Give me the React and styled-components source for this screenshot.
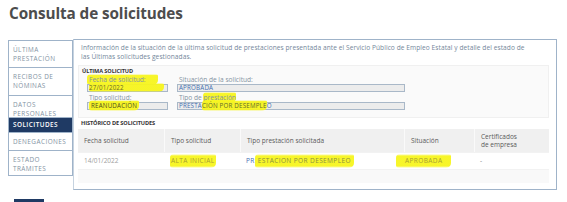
import React from 'react';
import styled, { createGlobalStyle } from 'styled-components';

const FONT = '"Open Sans", "Noto Sans", sans-serif';
const NAVY = '#1f3a64';
const LINE = '#9fb3c9';

const GlobalStyle = createGlobalStyle`
  html, body {
    margin: 0;
    padding: 0;
    background: #ffffff;
  }
  body {
    font-family: ${FONT};
    width: 567px;
    height: 202px;
    overflow: hidden;
  }
`;

const Page = styled.div`
  position: relative;
  width: 567px;
  height: 202px;
`;

const Title = styled.h1`
  margin: 0;
  padding: 3px 0 0 9px;
  height: 37px;
  box-sizing: border-box;
  font-size: 15.3px;
  font-weight: 700;
  color: #4d4d4d;
  letter-spacing: -0.1px;
`;

const Layout = styled.div`
  display: flex;
  align-items: flex-start;
  margin-left: 8px;
  margin-top: 3px;
`;

const Sidebar = styled.nav`
  width: 65px;
  display: flex;
  flex-direction: column;
  border-left: 1px solid ${LINE};
  border-top: 1px solid ${LINE};
  box-sizing: border-box;
`;

const NavItem = styled.div`
  height: ${(p) => p.$h}px;
  box-sizing: border-box;
  padding: ${(p) => (p.$active ? '0 4px' : '5px 4px 0')};
  display: flex;
  align-items: ${(p) => (p.$active ? 'center' : 'flex-start')};
  border-bottom: 1px solid ${LINE};
  border-right: 1px solid ${LINE};
  background: ${(p) => (p.$active ? NAVY : '#fff')};
  color: ${(p) => (p.$active ? '#fff' : '#8393a3')};
  font-size: 6.4px;
  line-height: 8.5px;
  font-weight: ${(p) => (p.$active ? 600 : 400)};
  letter-spacing: 0.45px;
  text-transform: uppercase;
`;

const Panel = styled.section`
  width: 484px;
  height: 151px;
  box-sizing: border-box;
  border: 1px solid ${LINE};
  border-left-color: #c6d3e0;
  margin-top: -1px;
  padding: 3px 7px 0 4px;
`;

const Intro = styled.p`
  margin: 0 0 4px 3px;
  font-size: 6.6px;
  line-height: 9px;
  letter-spacing: 0.06px;
  color: #74879b;
`;

const Card = styled.div`
  background: #fafafa;
  border: 1px solid #f0f0f0;
  height: 53px;
  box-sizing: border-box;
  padding: 2px 3px 0;
`;

const SectionTitle = styled.h3`
  margin: 0;
  font-size: 5.6px;
  line-height: 7px;
  font-weight: 700;
  color: #333;
  letter-spacing: -0.1px;
`;

const Fields = styled.div`
  display: grid;
  grid-template-columns: 81px 228px;
  column-gap: 9px;
  row-gap: 2px;
  margin: 1px 0 0 5px;
`;

const Field = styled.div`
  display: flex;
  flex-direction: column;
`;

const Label = styled.span`
  font-size: 6.6px;
  line-height: 8px;
  color: #8493a2;
  padding-left: 2px;
`;

const Value = styled.div`
  height: 8px;
  box-sizing: border-box;
  border: 1px solid #a9b8c8;
  background: #ececec;
  font-size: 6.2px;
  line-height: 6px;
  color: #3f6db1;
  padding-left: 1px;
  letter-spacing: 0.2px;
  white-space: nowrap;
`;

const History = styled.div`
  margin: 2px 0 0 3px;
`;

const Table = styled.div`
  margin: 2px 0 0 0;
  background: #f9f9f9;
  height: 54px;
`;

const Row = styled.div`
  display: grid;
  grid-template-columns: 86px 76px 164px 70px 1fr;
  height: ${(p) => p.$h}px;
  background: ${(p) => (p.$head ? '#f0f0f0' : '#fff')};
  border-bottom: 1px solid #f2f2f2;
`;

const Cell = styled.div`
  display: flex;
  align-items: center;
  padding-left: 6px;
  font-size: 6.5px;
  line-height: 8px;
  color: ${(p) => p.$color || '#5a5a5a'};
  letter-spacing: ${(p) => (p.$caps ? '0.4px' : '0')};
  border-left: ${(p) => (p.$sep ? '1px solid #fafafa' : 'none')};
  white-space: nowrap;
`;

const Mark = styled.span`
  background: linear-gradient(
    to bottom,
    rgba(247, 245, 30, 0) 0%,
    rgba(247, 245, 30, 0.95) 14%,
    rgba(247, 245, 30, 0.95) 86%,
    rgba(247, 245, 30, 0) 100%
  );
  padding: ${(p) => p.$pad || '2px 2px'};
  margin: ${(p) => p.$m || '0'};
  border-radius: 4px 2px 5px 3px;
  color: ${(p) => p.$ink || 'inherit'};
  box-decoration-break: clone;
`;

const BottomTab = styled.div`
  position: absolute;
  left: 14px;
  top: 199px;
  width: 30px;
  height: 3px;
  background: ${NAVY};
`;

const navItems = [
  { label: 'Última prestación', h: 27 },
  { label: 'Recibos de nóminas', h: 28 },
  { label: 'Datos personales', h: 22 },
  { label: 'Solicitudes', h: 15, active: true },
  { label: 'Denegaciones', h: 18 },
  { label: 'Estado trámites', h: 25 },
];

export default function App() {
  return (
    <Page>
      <GlobalStyle />
      <Title>Consulta de solicitudes</Title>
      <Layout>
        <Sidebar>
          {navItems.map((it) => (
            <NavItem key={it.label} $h={it.h} $active={it.active}>
              {it.label}
            </NavItem>
          ))}
        </Sidebar>
        <Panel>
          <Intro>
            Información de la situación de la última solicitud de prestaciones presentada ante el
            Servicio Público de Empleo Estatal y detalle del estado de
            <br />
            las Últimas solicitudes gestionadas.
          </Intro>
          <Card>
            <SectionTitle>ÚLTIMA SOLICITUD</SectionTitle>
            <Fields>
              <Field>
                <Label>
                  <Mark $pad="1px 12px 1px 2px" $m="0 0 0 -2px">Fecha de solicitud:</Mark>
                </Label>
                <Value>
                  <Mark $pad="0 40px 0 0" $ink="#6b6b2a">27/01/2022</Mark>
                </Value>
              </Field>
              <Field>
                <Label>Situación de la solicitud:</Label>
                <Value>APROBADA</Value>
              </Field>
              <Field>
                <Label>Tipo solicitud:</Label>
                <Value>
                  <Mark $pad="1px 2px" $ink="#4c4c20">REANUDACIÓN</Mark>
                </Value>
              </Field>
              <Field>
                <Label>
                  Tipo de <Mark $pad="1px 0">prestación</Mark>
                </Label>
                <Value>
                  PRESTA<Mark $pad="1px 0" $ink="#5f6a2a">CIÓN POR DESEMPLE</Mark>O
                </Value>
              </Field>
            </Fields>
          </Card>
          <History>
            <SectionTitle>HISTÓRICO DE SOLICITUDES</SectionTitle>
          </History>
          <Table>
            <Row $head $h={23}>
              <Cell>Fecha solicitud</Cell>
              <Cell $sep>Tipo solicitud</Cell>
              <Cell $sep>Tipo prestación solicitada</Cell>
              <Cell $sep>Situación</Cell>
              <Cell $sep>
                Certificados
                <br />
                de empresa
              </Cell>
            </Row>
            <Row $h={16}>
              <Cell $color="#a0a0a0">14/01/2022</Cell>
              <Cell $caps $color="#a8a030">
                <Mark $pad="3px 1px">ALTA INICIAL</Mark>
              </Cell>
              <Cell $caps $color="#3f6db1">
                PR
                <Mark $pad="3px 3px" $ink="#8c9040">ESTACION POR DESEMPLEO</Mark>
              </Cell>
              <Cell $caps $color="#a8a030">
                <Mark $pad="3px 9px" $m="0 0 0 -14px">APROBADA</Mark>
              </Cell>
              <Cell $color="#888">-</Cell>
            </Row>
          </Table>
        </Panel>
      </Layout>
      <BottomTab />
    </Page>
  );
}
